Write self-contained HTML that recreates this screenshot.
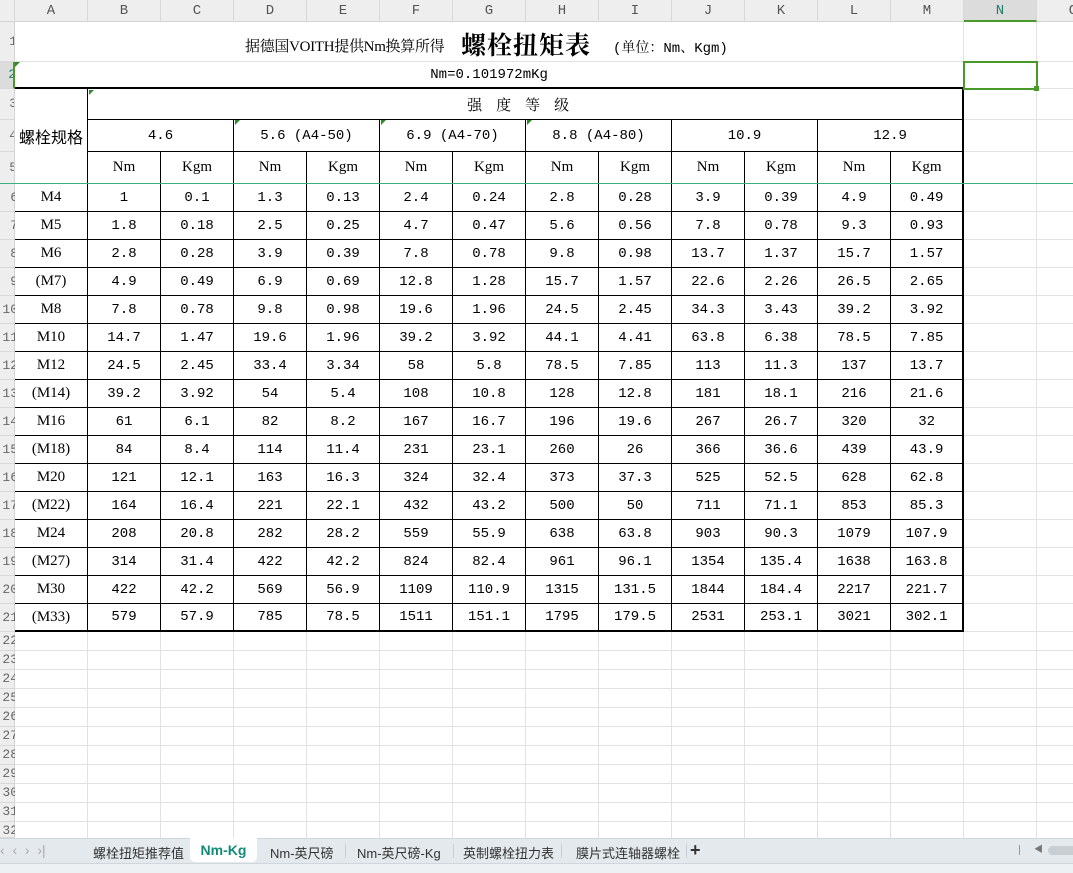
<!DOCTYPE html>
<html><head><meta charset="utf-8">
<style>
*{box-sizing:border-box;margin:0;padding:0}
body{width:1073px;height:873px;overflow:hidden;background:#fff;position:relative;font-family:"Liberation Serif","Noto Serif CJK SC",serif;}
.colh{position:absolute;top:0;height:22px;background:#eeeeee;border-right:1px solid #d8d8d8;border-bottom:1px solid #d4d4d4;text-align:center;font:14px/22px "Liberation Mono","Noto Sans CJK SC",monospace;color:#555}
.rowh{position:absolute;left:0;width:15px;background:#eeeeee;border-bottom:1px solid #d8d8d8;border-right:1px solid #d4d4d4;overflow:hidden;font:13px "Liberation Mono",monospace;color:#666;text-align:right}
.rowh span{position:absolute;right:-3px}
.rn{position:absolute;left:0;width:15px;overflow:hidden;font:13px "Liberation Mono",monospace;color:#666}
.rn span{position:absolute;right:-3px}
table{position:absolute;left:15px;top:22px;border-collapse:separate;border-spacing:0;table-layout:fixed;width:1095px}
td{border-right:1px solid #e2e2e2;border-bottom:1px solid #e2e2e2;text-align:center;vertical-align:middle;padding:0;white-space:nowrap;overflow:hidden;font:14px "Liberation Mono","Noto Serif CJK SC",monospace;color:#000}
td.b{border-right:1px solid #000;border-bottom:1px solid #000}
td.bb{border-bottom:2px solid #000}
td.br{border-right:2px solid #000}
td.a{font-family:"Liberation Serif","Noto Serif CJK SC",serif;font-size:15px}
.grid{position:absolute;left:15px;top:632px;width:1058px;height:206px;
background-image:repeating-linear-gradient(to right,transparent 0,transparent 72px,#e2e2e2 72px,#e2e2e2 73px),repeating-linear-gradient(to bottom,transparent 0,transparent 18px,#e2e2e2 18px,#e2e2e2 19px);}
</style></head><body>
<div class="colh" style="left:0;width:15px"></div>
<div class="colh" style="left:15px;width:73px">A</div>
<div class="colh" style="left:88px;width:73px">B</div>
<div class="colh" style="left:161px;width:73px">C</div>
<div class="colh" style="left:234px;width:73px">D</div>
<div class="colh" style="left:307px;width:73px">E</div>
<div class="colh" style="left:380px;width:73px">F</div>
<div class="colh" style="left:453px;width:73px">G</div>
<div class="colh" style="left:526px;width:73px">H</div>
<div class="colh" style="left:599px;width:73px">I</div>
<div class="colh" style="left:672px;width:73px">J</div>
<div class="colh" style="left:745px;width:73px">K</div>
<div class="colh" style="left:818px;width:73px">L</div>
<div class="colh" style="left:891px;width:73px">M</div>
<div class="colh" style="left:964px;width:73px;background:#dcdcdc;color:#1a7f6a;border-bottom:2px solid #4a9a2a">N</div>
<div class="colh" style="left:1037px;width:73px">O</div>

<div class="rowh" style="top:22px;height:40px"><span style="top:12px">1</span></div>
<div class="rowh" style="top:62px;height:27px;background:#dcdcdc;color:#1a7f6a;border-right:2px solid #4a9a2a"><span style="top:5px">2</span></div>
<div class="rowh" style="top:89px;height:31px"><span style="top:7px">3</span></div>
<div class="rowh" style="top:120px;height:32px"><span style="top:8px">4</span></div>
<div class="rowh" style="top:152px;height:32px"><span style="top:8px">5</span></div>
<div class="rowh" style="top:184px;height:448px;background:repeating-linear-gradient(to bottom,#eee 0,#eee 27px,#d8d8d8 27px,#d8d8d8 28px)"></div>
<div class="rowh" style="top:632px;height:206px;background:repeating-linear-gradient(to bottom,#eee 0,#eee 18px,#d8d8d8 18px,#d8d8d8 19px)"></div>
<div class="rn" style="top:190px;height:16px"><span>6</span></div>
<div class="rn" style="top:218px;height:16px"><span>7</span></div>
<div class="rn" style="top:246px;height:16px"><span>8</span></div>
<div class="rn" style="top:274px;height:16px"><span>9</span></div>
<div class="rn" style="top:302px;height:16px"><span>10</span></div>
<div class="rn" style="top:330px;height:16px"><span>11</span></div>
<div class="rn" style="top:358px;height:16px"><span>12</span></div>
<div class="rn" style="top:386px;height:16px"><span>13</span></div>
<div class="rn" style="top:414px;height:16px"><span>14</span></div>
<div class="rn" style="top:442px;height:16px"><span>15</span></div>
<div class="rn" style="top:470px;height:16px"><span>16</span></div>
<div class="rn" style="top:498px;height:16px"><span>17</span></div>
<div class="rn" style="top:526px;height:16px"><span>18</span></div>
<div class="rn" style="top:554px;height:16px"><span>19</span></div>
<div class="rn" style="top:582px;height:16px"><span>20</span></div>
<div class="rn" style="top:610px;height:16px"><span>21</span></div>
<div class="rn" style="top:633px;height:16px"><span>22</span></div>
<div class="rn" style="top:652px;height:16px"><span>23</span></div>
<div class="rn" style="top:671px;height:16px"><span>24</span></div>
<div class="rn" style="top:690px;height:16px"><span>25</span></div>
<div class="rn" style="top:709px;height:16px"><span>26</span></div>
<div class="rn" style="top:728px;height:16px"><span>27</span></div>
<div class="rn" style="top:747px;height:16px"><span>28</span></div>
<div class="rn" style="top:766px;height:16px"><span>29</span></div>
<div class="rn" style="top:785px;height:16px"><span>30</span></div>
<div class="rn" style="top:804px;height:16px"><span>31</span></div>
<div class="rn" style="top:823px;height:15px"><span>32</span></div>

<div class="grid"></div>

<table>
<colgroup><col style="width:73px"><col style="width:73px"><col style="width:73px"><col style="width:73px"><col style="width:73px"><col style="width:73px"><col style="width:73px"><col style="width:73px"><col style="width:73px"><col style="width:73px"><col style="width:73px"><col style="width:73px"><col style="width:73px"><col style="width:73px"><col style="width:73px"></colgroup>
<tr style="height:40px"><td colspan="13"></td><td></td><td></td></tr>
<tr style="height:27px"><td colspan="13" class="bb" style="font-size:14px">Nm=0.101972mKg</td><td></td><td></td></tr>
<tr style="height:31px"><td rowspan="3" class="b" style="font-family:'Noto Sans CJK SC',sans-serif;font-size:16px">螺栓规格</td><td colspan="12" class="b br" style="font-family:'Noto Serif CJK SC',serif;font-size:15px;letter-spacing:14px">强度等级</td><td></td><td></td></tr>
<tr style="height:32px"><td colspan="2" class="b">4.6</td><td colspan="2" class="b">5.6 (A4-50)</td><td colspan="2" class="b">6.9 (A4-70)</td><td colspan="2" class="b">8.8 (A4-80)</td><td colspan="2" class="b">10.9</td><td colspan="2" class="b br">12.9</td><td></td><td></td></tr>
<tr style="height:32px"><td class="b a">Nm</td><td class="b a">Kgm</td><td class="b a">Nm</td><td class="b a">Kgm</td><td class="b a">Nm</td><td class="b a">Kgm</td><td class="b a">Nm</td><td class="b a">Kgm</td><td class="b a">Nm</td><td class="b a">Kgm</td><td class="b a">Nm</td><td class="b a br">Kgm</td><td></td><td></td></tr>
<tr style="height:28px"><td class="b a">M4</td><td class="b">1</td><td class="b">0.1</td><td class="b">1.3</td><td class="b">0.13</td><td class="b">2.4</td><td class="b">0.24</td><td class="b">2.8</td><td class="b">0.28</td><td class="b">3.9</td><td class="b">0.39</td><td class="b">4.9</td><td class="b br">0.49</td><td></td><td></td></tr>
<tr style="height:28px"><td class="b a">M5</td><td class="b">1.8</td><td class="b">0.18</td><td class="b">2.5</td><td class="b">0.25</td><td class="b">4.7</td><td class="b">0.47</td><td class="b">5.6</td><td class="b">0.56</td><td class="b">7.8</td><td class="b">0.78</td><td class="b">9.3</td><td class="b br">0.93</td><td></td><td></td></tr>
<tr style="height:28px"><td class="b a">M6</td><td class="b">2.8</td><td class="b">0.28</td><td class="b">3.9</td><td class="b">0.39</td><td class="b">7.8</td><td class="b">0.78</td><td class="b">9.8</td><td class="b">0.98</td><td class="b">13.7</td><td class="b">1.37</td><td class="b">15.7</td><td class="b br">1.57</td><td></td><td></td></tr>
<tr style="height:28px"><td class="b a">(M7)</td><td class="b">4.9</td><td class="b">0.49</td><td class="b">6.9</td><td class="b">0.69</td><td class="b">12.8</td><td class="b">1.28</td><td class="b">15.7</td><td class="b">1.57</td><td class="b">22.6</td><td class="b">2.26</td><td class="b">26.5</td><td class="b br">2.65</td><td></td><td></td></tr>
<tr style="height:28px"><td class="b a">M8</td><td class="b">7.8</td><td class="b">0.78</td><td class="b">9.8</td><td class="b">0.98</td><td class="b">19.6</td><td class="b">1.96</td><td class="b">24.5</td><td class="b">2.45</td><td class="b">34.3</td><td class="b">3.43</td><td class="b">39.2</td><td class="b br">3.92</td><td></td><td></td></tr>
<tr style="height:28px"><td class="b a">M10</td><td class="b">14.7</td><td class="b">1.47</td><td class="b">19.6</td><td class="b">1.96</td><td class="b">39.2</td><td class="b">3.92</td><td class="b">44.1</td><td class="b">4.41</td><td class="b">63.8</td><td class="b">6.38</td><td class="b">78.5</td><td class="b br">7.85</td><td></td><td></td></tr>
<tr style="height:28px"><td class="b a">M12</td><td class="b">24.5</td><td class="b">2.45</td><td class="b">33.4</td><td class="b">3.34</td><td class="b">58</td><td class="b">5.8</td><td class="b">78.5</td><td class="b">7.85</td><td class="b">113</td><td class="b">11.3</td><td class="b">137</td><td class="b br">13.7</td><td></td><td></td></tr>
<tr style="height:28px"><td class="b a">(M14)</td><td class="b">39.2</td><td class="b">3.92</td><td class="b">54</td><td class="b">5.4</td><td class="b">108</td><td class="b">10.8</td><td class="b">128</td><td class="b">12.8</td><td class="b">181</td><td class="b">18.1</td><td class="b">216</td><td class="b br">21.6</td><td></td><td></td></tr>
<tr style="height:28px"><td class="b a">M16</td><td class="b">61</td><td class="b">6.1</td><td class="b">82</td><td class="b">8.2</td><td class="b">167</td><td class="b">16.7</td><td class="b">196</td><td class="b">19.6</td><td class="b">267</td><td class="b">26.7</td><td class="b">320</td><td class="b br">32</td><td></td><td></td></tr>
<tr style="height:28px"><td class="b a">(M18)</td><td class="b">84</td><td class="b">8.4</td><td class="b">114</td><td class="b">11.4</td><td class="b">231</td><td class="b">23.1</td><td class="b">260</td><td class="b">26</td><td class="b">366</td><td class="b">36.6</td><td class="b">439</td><td class="b br">43.9</td><td></td><td></td></tr>
<tr style="height:28px"><td class="b a">M20</td><td class="b">121</td><td class="b">12.1</td><td class="b">163</td><td class="b">16.3</td><td class="b">324</td><td class="b">32.4</td><td class="b">373</td><td class="b">37.3</td><td class="b">525</td><td class="b">52.5</td><td class="b">628</td><td class="b br">62.8</td><td></td><td></td></tr>
<tr style="height:28px"><td class="b a">(M22)</td><td class="b">164</td><td class="b">16.4</td><td class="b">221</td><td class="b">22.1</td><td class="b">432</td><td class="b">43.2</td><td class="b">500</td><td class="b">50</td><td class="b">711</td><td class="b">71.1</td><td class="b">853</td><td class="b br">85.3</td><td></td><td></td></tr>
<tr style="height:28px"><td class="b a">M24</td><td class="b">208</td><td class="b">20.8</td><td class="b">282</td><td class="b">28.2</td><td class="b">559</td><td class="b">55.9</td><td class="b">638</td><td class="b">63.8</td><td class="b">903</td><td class="b">90.3</td><td class="b">1079</td><td class="b br">107.9</td><td></td><td></td></tr>
<tr style="height:28px"><td class="b a">(M27)</td><td class="b">314</td><td class="b">31.4</td><td class="b">422</td><td class="b">42.2</td><td class="b">824</td><td class="b">82.4</td><td class="b">961</td><td class="b">96.1</td><td class="b">1354</td><td class="b">135.4</td><td class="b">1638</td><td class="b br">163.8</td><td></td><td></td></tr>
<tr style="height:28px"><td class="b a">M30</td><td class="b">422</td><td class="b">42.2</td><td class="b">569</td><td class="b">56.9</td><td class="b">1109</td><td class="b">110.9</td><td class="b">1315</td><td class="b">131.5</td><td class="b">1844</td><td class="b">184.4</td><td class="b">2217</td><td class="b br">221.7</td><td></td><td></td></tr>
<tr style="height:28px"><td class="b bb a">(M33)</td><td class="b bb">579</td><td class="b bb">57.9</td><td class="b bb">785</td><td class="b bb">78.5</td><td class="b bb">1511</td><td class="b bb">151.1</td><td class="b bb">1795</td><td class="b bb">179.5</td><td class="b bb">2531</td><td class="b bb">253.1</td><td class="b bb">3021</td><td class="b bb br">302.1</td><td></td><td></td></tr>
</table>

<!-- title -->
<div style="position:absolute;left:245px;top:35px;width:205px;font:15px 'Liberation Serif','Noto Serif CJK SC',serif;white-space:nowrap;letter-spacing:-0.3px">据德国VOITH提供Nm换算所得</div>
<div style="position:absolute;left:461px;top:26px;font:bold 25px 'Noto Serif CJK SC',serif;white-space:nowrap;letter-spacing:1px">螺栓扭矩表</div>
<div style="position:absolute;left:613px;top:37px;font:14px 'Liberation Mono','Noto Serif CJK SC',monospace;white-space:nowrap">(单位：Nm、Kgm)</div>

<!-- frozen line -->
<div style="position:absolute;left:0;top:183px;width:1073px;height:1px;background:#3fae7f"></div>
<!-- selection -->
<div style="position:absolute;left:963px;top:61px;width:75px;height:29px;border:2px solid #4a9a2a"></div>
<div style="position:absolute;left:1034px;top:86px;width:5px;height:5px;background:#4a9a2a"></div>
<!-- green corner marks -->
<div style="position:absolute;left:15px;top:62px;width:0;height:0;border-top:5px solid #2f8a2a;border-right:5px solid transparent"></div>
<div style="position:absolute;left:89px;top:90px;width:0;height:0;border-top:5px solid #2f8a2a;border-right:5px solid transparent"></div>
<div style="position:absolute;left:235px;top:120px;width:0;height:0;border-top:5px solid #2f8a2a;border-right:5px solid transparent"></div>
<div style="position:absolute;left:381px;top:120px;width:0;height:0;border-top:5px solid #2f8a2a;border-right:5px solid transparent"></div>
<div style="position:absolute;left:527px;top:120px;width:0;height:0;border-top:5px solid #2f8a2a;border-right:5px solid transparent"></div>

<!-- tab bar -->
<div style="position:absolute;left:0;top:838px;width:1073px;height:25px;background:#e4e9ee;border-top:1px solid #d0d6dc;font:13px 'Liberation Sans','Noto Sans CJK SC',sans-serif;color:#333">
  <span style="position:absolute;left:0;top:3px;color:#aaa;font-size:14px">‹ &nbsp;‹ &nbsp;› &nbsp;›|</span>
  <span style="position:absolute;left:93px;top:4px">螺栓扭矩推荐值</span>
  <div style="position:absolute;left:190px;top:-1px;width:67px;height:24px;background:#fff;border-radius:0 0 5px 5px;text-align:center;line-height:24px;color:#138a78;font-weight:bold;font-size:14px">Nm-Kg</div>
  <span style="position:absolute;left:270px;top:4px">Nm-英尺磅</span>
  <span style="position:absolute;left:345px;top:5px;width:1px;height:14px;background:#c8ced4"></span>
  <span style="position:absolute;left:357px;top:4px">Nm-英尺磅-Kg</span>
  <span style="position:absolute;left:453px;top:5px;width:1px;height:14px;background:#c8ced4"></span>
  <span style="position:absolute;left:463px;top:4px">英制螺栓扭力表</span>
  <span style="position:absolute;left:561px;top:5px;width:1px;height:14px;background:#c8ced4"></span>
  <span style="position:absolute;left:576px;top:4px">膜片式连轴器螺栓</span>
  <span style="position:absolute;left:686px;top:5px;width:1px;height:14px;background:#c8ced4"></span>
  <span style="position:absolute;left:690px;top:1px;font-size:18px;font-weight:bold">+</span>
  <span style="position:absolute;left:1019px;top:6px;width:1px;height:10px;background:#999"></span>
  <span style="position:absolute;left:1034px;top:3px;font-size:9px;color:#777">◀</span>
  <span style="position:absolute;left:1048px;top:7px;width:30px;height:9px;border-radius:5px;background:#c9ced3"></span>
</div>
<div style="position:absolute;left:0;top:863px;width:1073px;height:10px;background:#eef1f4;border-top:1px solid #d0d6dc"></div>
</body></html>
